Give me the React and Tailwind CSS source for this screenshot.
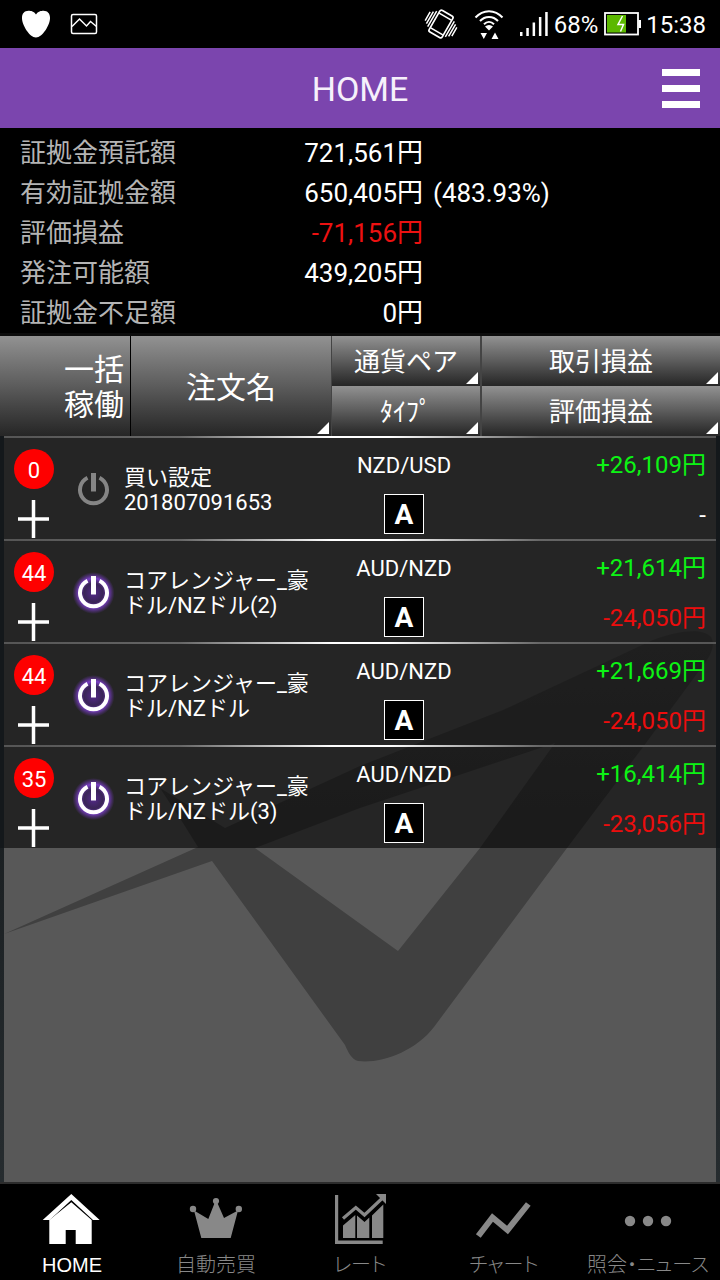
import { useState } from "react";

const summary = [
  { label: "証拠金預託額", value: "721,561円" },
  { label: "有効証拠金額", value: "650,405円", note: "(483.93%)" },
  { label: "評価損益", value: "-71,156円", negative: true },
  { label: "発注可能額", value: "439,205円" },
  { label: "証拠金不足額", value: "0円" },
];

const initialOrders = [
  { id: 1, count: 0, name: "買い設定201807091653", pair: "NZD/USD", type: "A", realized: "+26,109円", unrealized: "-", running: false },
  { id: 2, count: 44, name: "コアレンジャー_豪ドル/NZドル(2)", pair: "AUD/NZD", type: "A", realized: "+21,614円", unrealized: "-24,050円", running: true },
  { id: 3, count: 44, name: "コアレンジャー_豪ドル/NZドル", pair: "AUD/NZD", type: "A", realized: "+21,669円", unrealized: "-24,050円", running: true },
  { id: 4, count: 35, name: "コアレンジャー_豪ドル/NZドル(3)", pair: "AUD/NZD", type: "A", realized: "+16,414円", unrealized: "-23,056円", running: true },
];

const tabs = [
  { id: "home", label: "HOME", icon: HomeIcon },
  { id: "auto", label: "自動売買", icon: CrownIcon },
  { id: "rate", label: "レート", icon: RateIcon },
  { id: "chart", label: "チャート", icon: ChartIcon },
  { id: "news", label: "照会・ニュース", icon: MoreIcon },
];

function HomeIcon() {
  return (
    <svg width="60" height="56" viewBox="0 0 60 56" fill="currentColor" aria-hidden="true">
      <path d="M29.3 2 57.7 28H51L29.3 8 7.700 28H.7z" />
      <path d="M29.3 10.300 49.700 28v24h-16V38h-10v14H7.300V28z" />
    </svg>
  );
}

function CrownIcon() {
  return (
    <svg width="60" height="56" viewBox="0 0 60 56" fill="currentColor" aria-hidden="true">
      <circle cx="7" cy="17" r="3.2" />
      <circle cx="30" cy="9" r="3.1" />
      <circle cx="52.8" cy="17" r="3.2" />
      <path d="M8 18.5 22.3 27 29 10h2l7 16 14-7.5L44.7 46H15.3z" />
    </svg>
  );
}

function RateIcon() {
  return (
    <svg width="60" height="56" viewBox="0 0 60 56" fill="currentColor" aria-hidden="true">
      <path d="M5 3h3.2v45.5h44.5V52H5z" />
      <path d="M13 33.5 25.3 23v23H13zM27 23.5l7.5 6.5 4.8-4.5V46H27zM42 23.5 53.3 12.5V46H42z" />
      <path d="M13 26.5 25.8 15.5 34.5 23 52 6.5" fill="none" stroke="currentColor" strokeWidth="3.2" />
      <path d="M46 2h10v10z" />
    </svg>
  );
}

function ChartIcon() {
  return (
    <svg width="60" height="56" viewBox="0 0 60 56" aria-hidden="true">
      <path d="M4.3 44 18.5 25.5 33.5 38 54.3 12" fill="none" stroke="currentColor" strokeWidth="6" />
    </svg>
  );
}

function MoreIcon() {
  return (
    <svg width="60" height="56" viewBox="0 0 60 56" fill="currentColor" aria-hidden="true">
      <circle cx="12" cy="29" r="5.2" />
      <circle cx="30" cy="29" r="5.2" />
      <circle cx="48" cy="29" r="5.2" />
    </svg>
  );
}

function PowerIcon({ on }) {
  return (
    <svg width="48" height="48" viewBox="0 0 48 48" fill="none" aria-hidden="true">
      {on && (
        <>
          <defs>
            <radialGradient id="glow">
              <stop offset="0" stopColor="#5a2a98" stopOpacity="0.9" />
              <stop offset="0.45" stopColor="#3f2563" stopOpacity="0.8" />
              <stop offset="0.7" stopColor="#7a40c4" />
              <stop offset="1" stopColor="#6a35ae" stopOpacity="0" />
            </radialGradient>
          </defs>
          <circle cx="24.5" cy="25" r="21" fill="url(#glow)" />
        </>
      )}
      <g stroke={on ? "#fff" : "#858585"}>
        <path d="M18.5 12.700A13.500 13.500 0 1 0 30.500 12.700" strokeWidth="4" />
        <path d="M24.500 8V26.500" strokeWidth="5" />
      </g>
    </svg>
  );
}

function StatusBar() {
  return (
    <div className="flex h-12 items-center justify-between bg-black pl-[22px] pr-3.5 text-2xl text-white">
      <div className="flex items-center gap-5">
        <svg width="28" height="28" viewBox="0 0 28 28" fill="currentColor" aria-hidden="true">
          <path d="M14 4.500C16 1.200 19 .7 21.500.7 26 .7 28.200 4 28 8.500 27.800 15 20.500 27.500 14 27.500S.2 15 0 8.500C-.2 4 2 .7 6.500.7 9 .7 12 1.200 14 4.500z" />
        </svg>
        <svg width="28" height="22" viewBox="0 0 28 22" fill="none" stroke="currentColor" strokeWidth="1.500" aria-hidden="true">
          <rect x="1.500" y="1.500" width="25" height="19" rx="1.500" />
          <path d="M2 13.500 9.500 6l7 7 4-4.500 6 5" />
        </svg>
      </div>
      <div className="flex items-center">
        <svg className="mr-4" width="34" height="32" viewBox="0 0 34 32" fill="none" stroke="currentColor" strokeWidth="1.700" aria-hidden="true">
          <g transform="rotate(30 17 16)">
            <rect x="9.500" y="3.500" width="15" height="25" rx="2" />
            <path d="M10 7.500h14M10 24.500h14" />
            <path d="M6.800 7v18M4.200 9v14M1.600 11v10M27.200 7v18M29.800 9v14M32.400 11v10" strokeWidth="1.500" />
          </g>
        </svg>
        <svg className="mr-4" width="30" height="32" viewBox="0 0 30 32" fill="none" stroke="currentColor" strokeWidth="2" aria-hidden="true">
          <path d="M1.500 9.500C9 1 21 1 28.500 9.500M6 13c5-5.500 13-5.500 18 0M10 16.200c3-3 7-3 10 0" />
          <path d="M11 18.500c2.500-2 5.500-2 8 0l-4 4zM6.500 25h6.500l-3.200 6zM17.500 31h7l-3.500-6.500z" fill="currentColor" stroke="none" />
        </svg>
        <svg className="mr-1.5" width="28" height="26" viewBox="0 0 28 26" fill="currentColor" aria-hidden="true">
          <path d="M0 21h2.500v4H0zM6.300 17h2.500v8H6.300zM12.600 11.500h2.500V25h-2.500zM18.900 6h2.500v19h-2.500zM25.200 1h2.500v24h-2.500z" />
        </svg>
        <span className="pt-0.5">68%</span>
        <svg className="ml-1.5 mr-1" width="38" height="24" viewBox="0 0 38 24" aria-hidden="true">
          <rect x="1" y="1" width="33" height="21.500" fill="none" stroke="#fff" strokeWidth="1.800" />
          <path d="M3 3h19v17.500H3z" fill="#5cb800" />
          <path d="M34.500 8H37v8h-2.500z" fill="#fff" />
          <path d="M18.500 4 14 12.500h5.500L16.500 19.500M18.500 19.500" fill="none" stroke="#fff" strokeWidth="1.500" />
        </svg>
        <span className="pt-0.5">15:38</span>
      </div>
    </div>
  );
}

function HeadButton({ children, sortable = true, className }) {
  return (
    <button type="button" className={`relative block w-full bg-linear-to-b from-[#929292] via-[#5c5c5c] to-[#262626] pt-0.5 font-normal ${className}`}>
      {children}
      {sortable && (
        <svg className="absolute bottom-0.5 right-0.5" width="12" height="12" viewBox="0 0 12 12" aria-hidden="true">
          <path d="M12 0v12H0z" fill="#fff" />
        </svg>
      )}
    </button>
  );
}

function OrderRow({ order, onToggle }) {
  return (
    <tr className="bg-black/58 bg-[linear-gradient(to_right,#555_0%,#666_25%,#fff_46%,#fff_54%,#666_75%,#555_100%)] bg-size-[100%_2px] bg-no-repeat">
      <td colSpan={2} className="h-[103px] border-l-4 border-[#14181b] p-0 pt-0.5">
        <div className="flex h-[101px] items-center">
          <div className="flex h-full w-[60px] flex-col items-center pt-[11px]">
            <span className="flex size-10 items-center justify-center rounded-full bg-[#fe0000] pt-0.5 text-[22px]">
              {order.count}
            </span>
            <button type="button" aria-label="詳細を開く" className="mt-2.5">
              <svg width="32" height="40" viewBox="0 0 32 40" aria-hidden="true">
                <path d="M0 20h31M15.500 1v38" stroke="#fff" strokeWidth="3.500" />
              </svg>
            </button>
          </div>
          <button
            type="button"
            aria-label="稼働切替"
            aria-pressed={order.running}
            onClick={() => onToggle(order.id)}
            className="ml-[5px] w-12"
          >
            <PowerIcon on={order.running} />
          </button>
          <p className="ml-[7px] w-[196px] pt-0.5 text-[22px] leading-[25px]">{order.name}</p>
        </div>
      </td>
      <td className="p-0 pr-1 pt-0.5 text-center text-[22px]">
        <div className="h-[50px] pt-px leading-[52px]">{order.pair}</div>
        <div className="flex h-[50px] items-center justify-center">
          <span className="flex size-10 items-center justify-center border border-white bg-black pt-0.5 text-[28px] font-bold">
            {order.type}
          </span>
        </div>
      </td>
      <td className="border-r-4 border-[#14181b] p-0 pr-2.5 pt-0.5 text-right text-2xl">
        <div className="h-[50px] leading-[52px] text-[#0cf414]">{order.realized}</div>
        <div className={`h-[50px] leading-[52px] ${order.unrealized === "-" ? "text-white" : "text-[#ec0d0d]"}`}>
          {order.unrealized}
        </div>
      </td>
    </tr>
  );
}

const App = () => {
  const [orders, setOrders] = useState(initialOrders);
  const [activeTab, setActiveTab] = useState("home");

  const toggleOrder = (id) => {
    setOrders(orders.map((o) => (o.id === id ? { ...o, running: !o.running } : o)));
  };

  return (
    <div lang="ja" className="flex min-h-screen flex-col bg-black font-[Roboto,'Noto_Sans_CJK_JP',sans-serif] text-white">
      <StatusBar />

      {/* Title bar */}
      <header className="grid h-20 grid-cols-[1fr_auto_1fr] items-center bg-[#7b45ae] px-5">
        <h1 className="col-start-2 pt-0.5 text-[34px] text-[#f6f0fb]">HOME</h1>
        <button type="button" aria-label="メニュー" className="flex flex-col gap-[9px] justify-self-end">
          <span className="h-[7px] w-[38px] bg-white" />
          <span className="h-[7px] w-[38px] bg-white" />
          <span className="h-[7px] w-[38px] bg-white" />
        </button>
      </header>

      {/* Account summary */}
      <dl className="border-b-3 border-[#0c0c0c] pt-[5px] text-[26px] leading-10">
        {summary.map((item) => (
          <div key={item.label} className="flex h-10 px-5">
            <dt className="w-[190px] text-[#b4b4b4]">{item.label}</dt>
            <dd className={`w-[213px] text-right ${item.negative ? "text-[#ec1111]" : ""}`}>{item.value}</dd>
            {item.note && <dd className="ml-2.5">{item.note}</dd>}
          </div>
        ))}
      </dl>

      {/* Orders */}
      <main className="relative flex-1 border-b-2 border-[#2c2c2c] bg-linear-to-b from-[#0c0f11] to-[#262c2f]">
        <div className="absolute inset-x-1 inset-y-0 bg-[#585858]">
          <svg className="size-full" viewBox="4 336 712 846" aria-hidden="true">
            <defs>
              <linearGradient id="mark" gradientUnits="userSpaceOnUse" x1="0" y1="628" x2="0" y2="848">
                <stop offset="0" stopColor="#4b4b4b" />
                <stop offset="1" stopColor="#404040" />
              </linearGradient>
            </defs>
            <path
              d="M4 934 198 847 183 823 160 788 225 828 360 766 503 710 653 640C680 630 703 628 711 637 715 644 712 652 707 660L643 747 567 848 434 1027C415 1052 380 1064 358 1061 352 1060 348 1052 345 1045L212 861zM255 848 398 951 480 848 555 743 360 808z"
              fill="url(#mark)"
              fillRule="evenodd"
            />
          </svg>
        </div>
        <table className="relative w-full table-fixed border-separate border-spacing-0">
          <colgroup>
            <col className="w-[131px]" />
            <col className="w-[200px]" />
            <col className="w-[150px]" />
            <col />
          </colgroup>
          <thead>
            <tr>
              <th rowSpan={2} className="p-0">
                <HeadButton sortable={false} className="h-[100px] border-r border-black pr-1.5 text-right text-[30px] leading-[35px]">
                  一括
                  <br />
                  稼働
                </HeadButton>
              </th>
              <th rowSpan={2} className="p-0">
                <HeadButton className="h-[100px] text-[30px]">注文名</HeadButton>
              </th>
              <th className="p-0">
                <HeadButton className="h-[50px] border-x border-[#444] text-[26px]">通貨ペア</HeadButton>
              </th>
              <th className="p-0">
                <HeadButton className="h-[50px] border-l border-[#444] text-[26px]">取引損益</HeadButton>
              </th>
            </tr>
            <tr>
              <th className="p-0">
                <HeadButton className="h-[50px] border-x border-[#444] text-[26px]">ﾀｲﾌﾟ</HeadButton>
              </th>
              <th className="p-0">
                <HeadButton className="h-[50px] border-l border-[#444] text-[26px]">評価損益</HeadButton>
              </th>
            </tr>
          </thead>
          <tbody>
            {orders.map((order) => (
              <OrderRow key={order.id} order={order} onToggle={toggleOrder} />
            ))}
          </tbody>
        </table>
      </main>

      {/* Bottom tabs */}
      <nav className="grid h-24 grid-cols-5 bg-black font-['Liberation_Sans','Noto_Sans_CJK_JP',sans-serif]">
        {tabs.map(({ id, label, icon: Icon }) => (
          <button
            key={id}
            type="button"
            onClick={() => setActiveTab(id)}
            className={`flex flex-col items-center pt-2 ${activeTab === id ? "text-white" : "text-[#888]"}`}
          >
            <Icon />
            <span className="mt-[3px] whitespace-nowrap text-xl leading-7 font-light [font-feature-settings:'palt']">{label}</span>
          </button>
        ))}
      </nav>
    </div>
  );
};

export default App;
